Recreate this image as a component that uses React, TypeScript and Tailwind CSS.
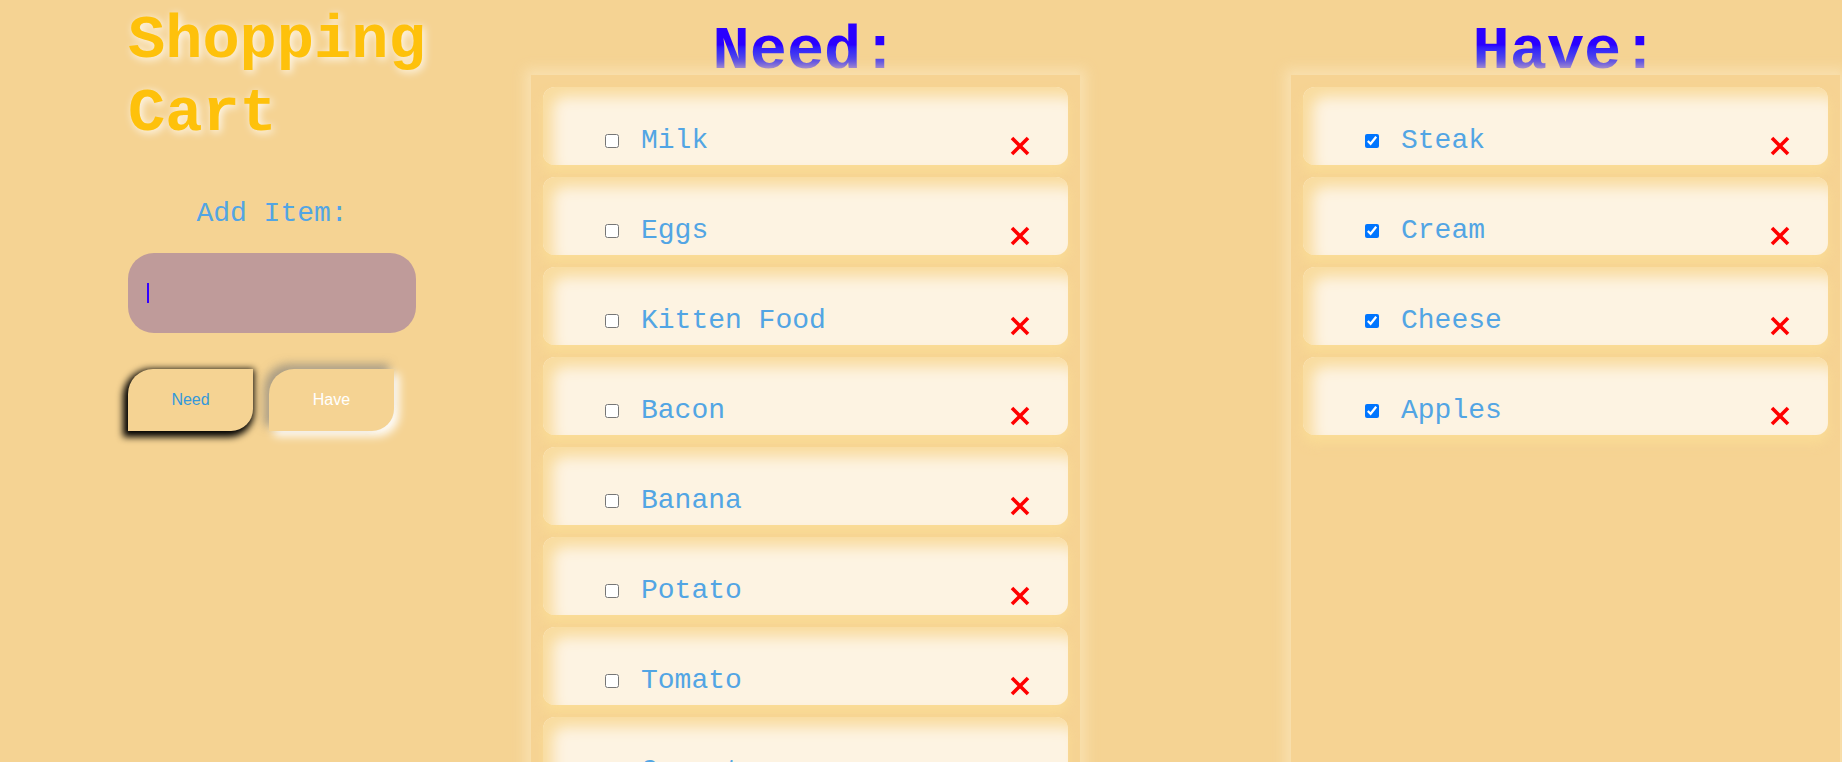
import React from "react";

const need = ["Milk", "Eggs", "Kitten Food", "Bacon", "Banana", "Potato", "Tomato", "Carrots"];
const have = ["Steak", "Cream", "Cheese", "Apples"];

function RemoveIcon() {
  return (
    <svg width="20" height="20" viewBox="0 0 20 20" className="ml-auto mt-[10px] shrink-0">
      <path d="M2 2 L18 18 M18 2 L2 18" stroke="#ff0000" strokeWidth="3.6" fill="none" />
    </svg>
  );
}

function Item({ name, done }: { name: string; done: boolean }) {
  return (
    <div className="h-[78px] shrink-0 rounded-[12px] bg-[#fdf3e2] shadow-[inset_10px_10px_14px_#f9dc9f,0_8px_12px_rgba(251,222,150,0.8)] flex items-end pb-[3px] pl-[62px] pr-[38px]">
      <div className="flex items-center w-full">
        <input type="checkbox" defaultChecked={done} className="m-0 w-[14px] h-[14px]" />
        <span className="ml-[22px] text-[28px] text-[#52a5e4] whitespace-nowrap">{name}</span>
        <RemoveIcon />
      </div>
    </div>
  );
}

function ListColumn({ title, items, done }: { title: string; items: string[]; done: boolean }) {
  return (
    <div className="flex flex-col w-[549px] shrink-0">
      <div className="h-[75px] flex justify-center">
        <h2 className="pt-[22px] text-[62px] leading-[60px] font-bold bg-linear-to-b from-[#2a00ff] from-60% to-[#7b5bd3] bg-clip-text text-transparent">
          {title}
        </h2>
      </div>
      <div className="flex-1 bg-[#f6d393] shadow-[0_0_12px_6px_rgba(250,226,178,0.9)] flex flex-col gap-[12px] pt-[12px] px-[12px] pb-[12px]">
        {items.map((it) => (
          <Item key={it} name={it} done={done} />
        ))}
      </div>
    </div>
  );
}

export default function App() {
  return (
    <div className="flex min-h-screen bg-[#f5d393] font-['Liberation_Mono','Courier_New',monospace] overflow-hidden">
      <div className="ml-[128px] w-[288px] shrink-0 flex flex-col">
        <h1 className="pt-[4px] text-[62px] leading-[73px] font-bold text-[#fec10b] [text-shadow:2px_2px_8px_rgba(255,255,255,0.9)]">
          Shopping Cart
        </h1>
        <p className="mt-[43px] text-center text-[28px] text-[#52a5e4]">Add Item:</p>
        <div className="mt-[18px] h-[80px] rounded-[26px] bg-[#bf9b9a] flex items-center pl-[19px]">
          <span className="w-[2px] h-[20px] bg-[#3300ff]" />
        </div>
        <div className="mt-[36px] flex gap-[16px] font-['Liberation_Sans',Arial,sans-serif] text-[16px]">
          <button
            type="button"
            className="w-[125px] h-[62px] bg-[#f5d393] text-[#3498db] rounded-tl-[25px] rounded-br-[22px] shadow-[-2px_3px_7px_3px_#000]"
          >
            Need
          </button>
          <button
            type="button"
            className="w-[125px] h-[62px] bg-[#f5d393] text-white rounded-tl-[25px] rounded-br-[22px] shadow-[-5px_-5px_10px_rgba(120,120,120,0.6),5px_5px_10px_#ffffff]"
          >
            Have
          </button>
        </div>
      </div>
      <div className="ml-[115px]">
        <ListColumn title="Need:" items={need} done={false} />
      </div>
      <div className="ml-[211px] flex">
        <ListColumn title="Have:" items={have} done={true} />
      </div>
    </div>
  );
}
